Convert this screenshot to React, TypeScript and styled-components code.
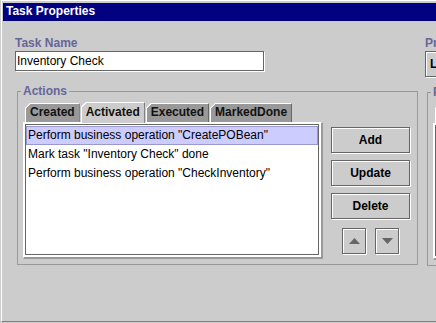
import React from 'react'
import styled, { createGlobalStyle } from 'styled-components'

const GlobalStyle = createGlobalStyle`
  html, body {
    margin: 0;
    padding: 0;
    background: #cccccc;
  }
  body {
    font-family: "Liberation Sans", Arial, sans-serif;
    font-size: 12px;
  }
`

const actionTabs = ['Created', 'Activated', 'Executed', 'MarkedDone']
const actions = [
  'Perform business operation "CreatePOBean"',
  'Mark task "Inventory Check" done',
  'Perform business operation "CheckInventory"',
]

const TabPane: React.FC<{ tabs: string[]; active: number; width: number; children?: React.ReactNode }> = ({ tabs, active, width, children }) => (
  <StyledPane style={{ width }}>
    <StyledTabRow>
      {tabs.map((t, idx) => (
        <StyledTab key={t} $active={idx === active}>{t}</StyledTab>
      ))}
    </StyledTabRow>
    <StyledPanel>
      <StyledList>{children}</StyledList>
    </StyledPanel>
  </StyledPane>
)

const Triangle: React.FC<{ down?: boolean }> = ({ down }) => (
  <svg width="11" height="6" viewBox="0 0 11 6">
    {down
      ? <polygon points="0,0 11,0 5.5,6" fill="#666666" />
      : <polygon points="5.5,0 11,6 0,6" fill="#666666" />}
  </svg>
)

const App: React.FC = () => {
  return (
    <>
      <GlobalStyle />
      <StyledWindow>
        <StyledTitleBar>Task Properties</StyledTitleBar>
        <StyledBody>
          <StyledLeft>
            <StyledLabel>Task Name</StyledLabel>
            <StyledTextField readOnly value="Inventory Check" />
            <StyledGroup>
              <StyledLegend>Actions</StyledLegend>
              <StyledGroupInner>
                <TabPane tabs={actionTabs} active={1} width={300}>
                  {actions.map((a, idx) => (
                    <StyledRow key={idx} $selected={idx === 0}>{a}</StyledRow>
                  ))}
                </TabPane>
                <StyledButtonColumn>
                  <StyledButton>Add</StyledButton>
                  <StyledButton>Update</StyledButton>
                  <StyledButton>Delete</StyledButton>
                  <StyledArrowRow>
                    <StyledArrowButton><Triangle /></StyledArrowButton>
                    <StyledArrowButton><Triangle down /></StyledArrowButton>
                  </StyledArrowRow>
                </StyledButtonColumn>
              </StyledGroupInner>
            </StyledGroup>
          </StyledLeft>
          <StyledRight>
            <StyledLabel>Priority</StyledLabel>
            <StyledCombo>Low</StyledCombo>
            <StyledGroup $top={8}>
              <StyledLegend>Performers</StyledLegend>
              <StyledGroupInner>
                <TabPane tabs={['Users', 'Roles']} active={0} width={180} />
              </StyledGroupInner>
            </StyledGroup>
          </StyledRight>
        </StyledBody>
      </StyledWindow>
    </>
  )
}

const StyledWindow = styled.div`
  width: 435px;
  height: 322px;
  margin-left: 1px;
  box-sizing: border-box;
  border-top: 1px solid #ffffff;
  border-left: 1px solid #ffffff;
  border-bottom: 1px solid #808080;
  padding: 2px 0 0 1px;
  background: #cccccc;
  overflow: hidden;
  display: flex;
  flex-direction: column;
`
const StyledTitleBar = styled.div`
  height: 18px;
  flex: none;
  background: #000080;
  color: #ffffff;
  font-weight: bold;
  font-size: 12px;
  line-height: 17px;
  padding-left: 3px;
`
const StyledBody = styled.div`
  display: flex;
  gap: 7px;
  padding: 15px 0 0 12px;
`
const StyledLeft = styled.div`
  width: 403px;
  flex: none;
  display: flex;
  flex-direction: column;
`
const StyledRight = styled.div`
  width: 220px;
  flex: none;
  display: flex;
  flex-direction: column;
`
const StyledLabel = styled.div`
  font-weight: bold;
  font-size: 12px;
  line-height: 14px;
  color: #666699;
  margin-bottom: 1px;
`
const StyledTextField = styled.input`
  width: 249px;
  height: 20px;
  box-sizing: border-box;
  margin: 0;
  padding: 0 0 0 1px;
  border: 1px solid #666666;
  box-shadow: 1px 1px 0 #ffffff;
  background: #ffffff;
  font-family: "Liberation Sans", Arial, sans-serif;
  font-size: 12px;
  color: #000000;
  outline: none;
`
const StyledCombo = styled.div`
  width: 160px;
  height: 26px;
  box-sizing: border-box;
  border: 1px solid #666666;
  box-shadow: 1px 1px 0 #ffffff, inset 1px 1px 0 #ffffff;
  padding-left: 4px;
  font-weight: bold;
  line-height: 24px;
  color: #000000;
`
const StyledGroup = styled.fieldset<{ $top?: number }>`
  margin: ${(p) => p.$top ?? 13}px 0 0 2px;
  padding: 0;
  border: 1px solid #999999;
  min-width: 0;
`
const StyledLegend = styled.legend`
  margin-left: 3px;
  padding: 0 2px;
  font-weight: bold;
  font-size: 12px;
  line-height: 14px;
  color: #666699;
`
const StyledGroupInner = styled.div`
  display: flex;
  align-items: flex-start;
  gap: 8px;
  padding: 4px 5px 5px 5px;
`
const StyledPane = styled.div`
  flex: none;
  display: flex;
  flex-direction: column;
`
const StyledTabRow = styled.div`
  display: flex;
  align-items: flex-end;
  gap: 1px;
  padding-left: 2px;
  height: 20px;
  position: relative;
  z-index: 1;
`
const StyledTab = styled.div<{ $active: boolean }>`
  box-sizing: border-box;
  height: ${(p) => (p.$active ? 21 : 19)}px;
  margin-bottom: ${(p) => (p.$active ? -1 : 0)}px;
  padding: 0 4px;
  border-top: 1px solid #ffffff;
  border-left: 1px solid #ffffff;
  border-right: 1px solid #666666;
  background: linear-gradient(135deg, transparent 3.5px, #ffffff 3.5px, #ffffff 4.6px, ${(p) => (p.$active ? '#cccccc' : '#999999')} 4.6px);
  background-origin: border-box;
  clip-path: polygon(5px 0, 100% 0, 100% 100%, 0 100%, 0 5px);
  font-weight: bold;
  font-size: 12px;
  line-height: ${(p) => (p.$active ? 19 : 17)}px;
  color: #111111;
  white-space: nowrap;
`
const StyledPanel = styled.div`
  height: 137px;
  box-sizing: border-box;
  border-top: 1px solid #ffffff;
  border-left: 1px solid #ffffff;
  border-right: 2px solid #999999;
  border-bottom: 2px solid #999999;
  padding: 1px 2px 2px 1px;
  background: #ffffff;
  display: flex;
`
const StyledList = styled.div`
  flex: 1;
  border: 1px solid #666666;
  background: #ffffff;
  padding-top: 1px;
`
const StyledRow = styled.div<{ $selected: boolean }>`
  height: 19px;
  box-sizing: border-box;
  border: 1px solid ${(p) => (p.$selected ? '#9999cc' : 'transparent')};
  background: ${(p) => (p.$selected ? '#ccccff' : 'transparent')};
  padding-left: 1px;
  font-size: 12px;
  line-height: 17px;
  color: #000000;
  white-space: nowrap;
`
const StyledButtonColumn = styled.div`
  width: 79px;
  flex: none;
  display: flex;
  flex-direction: column;
  gap: 7px;
  margin-top: 25px;
`
const StyledButton = styled.div`
  height: 26px;
  box-sizing: border-box;
  border: 1px solid #666666;
  box-shadow: inset 1px 1px 0 #ffffff, 1px 1px 0 #ffffff;
  background: #cccccc;
  display: flex;
  align-items: center;
  justify-content: center;
  font-weight: bold;
  font-size: 12px;
  color: #000000;
`
const StyledArrowRow = styled.div`
  display: flex;
  justify-content: center;
  gap: 9px;
  margin-top: 2px;
`
const StyledArrowButton = styled(StyledButton)`
  width: 24px;
`

export default App
